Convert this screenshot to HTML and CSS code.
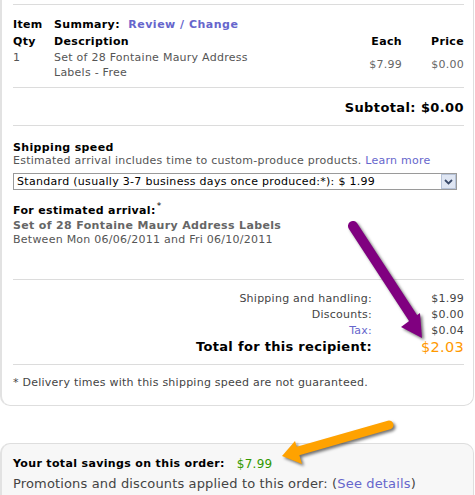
FILE: index.html
```html
<!DOCTYPE html>
<html>
<head>
<meta charset="utf-8">
<link rel="stylesheet" href="styles.css">
</head>
<body>
<div class="card order">
  <div class="rule"></div>
  <div class="items">
    <div class="h c1 r1">Item</div>
    <div class="h c2 r1 span">Summary:&nbsp; <a class="link bold">Review / Change</a></div>
    <div class="h c1 r2">Qty</div>
    <div class="h c2 r2">Description</div>
    <div class="h c3 r2 right">Each</div>
    <div class="h c4 r2 right">Price</div>
    <div class="c1 r3 txt">1</div>
    <div class="c2 r3 txt desc">Set of 28 Fontaine Maury Address Labels - Free</div>
    <div class="c3 r3 txt right mid">$7.99</div>
    <div class="c4 r3 txt right mid">$0.00</div>
  </div>
  <div class="rule"></div>
  <div class="subtotal">Subtotal: $0.00</div>
  <div class="rule"></div>
  <div class="shipping">
    <div class="h">Shipping speed</div>
    <div class="txt">Estimated arrival includes time to custom-produce products. <a class="link">Learn more</a></div>
    <div class="select">
      <span class="sel-text">Standard (usually 3-7 business days once produced:*): $ 1.99</span>
      <span class="sel-btn"><svg width="9" height="6" viewBox="0 0 9 6"><path d="M1 1 L4.5 4.5 L8 1" fill="none" stroke="#3a4a6a" stroke-width="1.8"/></svg></span>
    </div>
    <div class="arrival">
      <div class="h big">For estimated arrival:<sup>*</sup></div>
      <div class="h gray">Set of 28 Fontaine Maury Address Labels</div>
      <div class="txt">Between Mon 06/06/2011 and Fri 06/10/2011</div>
    </div>
  </div>
  <div class="rule"></div>
  <div class="totals">
    <div class="lbl">Shipping and handling:</div><div class="val">$1.99</div>
    <div class="lbl">Discounts:</div><div class="val">$0.00</div>
    <div class="lbl"><a class="link">Tax:</a></div><div class="val">$0.04</div>
    <div class="lbl total">Total for this recipient:</div><div class="val grand">$2.03</div>
  </div>
  <div class="rule"></div>
  <div class="note">* Delivery times with this shipping speed are not guaranteed.</div>
</div>

<div class="card savings">
  <div class="save-line"><span class="h">Your total savings on this order:</span><span class="green">$7.99</span></div>
  <div class="promo">Promotions and discounts applied to this order: (<a class="link">See details</a>)</div>
  <div class="promo">amount for each of the labels with a coupon</div>
</div>

<svg class="arrows" width="475" height="495" viewBox="0 0 475 495">
  <g class="shadow">
    <line x1="353" y1="226" x2="413" y2="318" stroke="#800080" stroke-width="10" stroke-linecap="round"/>
    <polygon points="401,327 422,338 420,313" fill="#800080"/>
    <line x1="389" y1="425" x2="298" y2="451" stroke="#ffa200" stroke-width="9" stroke-linecap="round"/>
    <polygon points="282,456 295,441 302,464" fill="#ffa200"/>
  </g>
</svg>
</body>
</html>
```
FILE: styles.css
```css
html, body {
  margin: 0;
  padding: 0;
  background: #fff;
}
body {
  font-family: "DejaVu Sans", Verdana, sans-serif;
  font-size: 11px;
  letter-spacing: 0.25px;
  color: #555;
  width: 475px;
  height: 495px;
  overflow: hidden;
  position: relative;
}
.card {
  box-sizing: border-box;
  width: 474px;
  border: 1px solid #dedede;
  border-left: 2px solid #e2e2e2;
}
.order {
  margin-top: -1px;
  border-top: 0;
  border-radius: 0 0 10px 10px;
  padding: 5px 9px 0 11px;
  height: 407px;
}
.rule {
  border-top: 1px solid #dcdcdc;
}
.h {
  font-weight: bold;
  color: #000;
  letter-spacing: 0.35px;
}
.txt { color: #555; }
.link { color: #6666cc; text-decoration: none; }
.bold { font-weight: bold; letter-spacing: 0.5px; }
.items {
  display: grid;
  grid-template-columns: 41px 234px 1fr 62px;
  padding: 12px 0 7px;
  line-height: 16px;
}
.c1 { grid-column: 1; }
.c2 { grid-column: 2; }
.c3 { grid-column: 3; }
.c4 { grid-column: 4; }
.r1 { grid-row: 1; }
.r2 { grid-row: 2; margin-top: 1px; }
.r3 { grid-row: 3; }
.span { grid-column: 2 / 5; }
.right { text-align: right; }
.mid { align-self: center; color: #666; }
.desc { line-height: 15px; }
.subtotal {
  text-align: right;
  font-weight: bold;
  font-size: 13px;
  letter-spacing: 0.4px;
  color: #000;
  line-height: 18px;
  padding: 11px 0 8px;
}
.shipping {
  padding-top: 15px;
  padding-bottom: 31px;
  line-height: 13px;
}
.select {
  margin-top: 6px;
  width: 444px;
  height: 17px;
  box-sizing: border-box;
  border: 1px solid #9a9a9a;
  display: flex;
  align-items: center;
  justify-content: space-between;
  color: #000;
  padding-left: 3px;
  letter-spacing: 0.3px;
}
.sel-btn {
  width: 15px;
  height: 15px;
  box-sizing: border-box;
  border: 1px solid #b7c3d8;
  background: #dfe6f3;
  display: flex;
  align-items: center;
  justify-content: center;
}
.arrival {
  margin-top: 14px;
  line-height: 14.5px;
}
.arrival sup {
  font-size: 9px;
  font-weight: normal;
  line-height: 0;
  vertical-align: 5px;
  margin-left: 1px;
}
.gray { color: #666; }
.totals {
  display: grid;
  grid-template-columns: 1fr 92px;
  padding: 11px 0 9px;
  line-height: 16px;
  color: #444;
}
.lbl, .val { text-align: right; }
.total {
  font-size: 13px;
  font-weight: bold;
  letter-spacing: 0.3px;
  color: #000;
}
.grand {
  font-size: 14.5px;
  letter-spacing: 0.3px;
  color: #ff9900;
}
.note {
  line-height: 15px;
  padding-top: 10px;
  color: #444;
}
.savings {
  margin-top: 37px;
  border-radius: 10px 10px 0 0;
  background: #f7f7f7;
  padding: 12px 9px 0 11px;
  height: 80px;
  line-height: 16px;
}
.save-line {
  display: flex;
  gap: 12px;
  margin-bottom: 3px;
}
.green { color: #339900; font-size: 12px; }
.promo {
  font-size: 13px;
  letter-spacing: 0.15px;
  line-height: 17px;
  color: #444;
}
.arrows {
  position: absolute;
  left: 0;
  top: 0;
  pointer-events: none;
}
.shadow {
  filter: drop-shadow(2px 2px 1.5px rgba(0,0,0,0.55));
}
```
